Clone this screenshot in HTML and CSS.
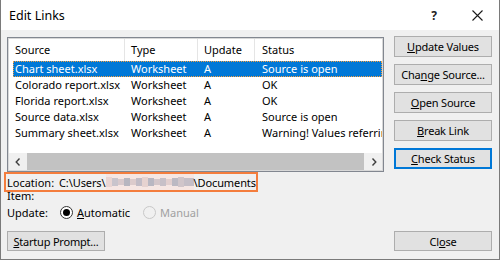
FILE: index.html
```html
<!DOCTYPE html>
<html>
<head>
<meta charset="utf-8">
<link rel="stylesheet" href="styles.css">
</head>
<body>
<div class="window">
  <div class="titlebar">
    <span class="title">Edit Links</span>
    <span class="help">?</span>
    <svg class="close-x" width="11" height="11" viewBox="0 0 11 11"><path d="M0.5 0.5 L10.5 10.5 M10.5 0.5 L0.5 10.5" stroke="#1a1a1a" stroke-width="1.1" fill="none"/></svg>
  </div>
  <div class="body">
    <div class="main">
      <div class="listbox">
        <div class="grid header">
          <div class="c1">Source</div>
          <div class="c2">Type</div>
          <div class="c3">Update</div>
          <div class="c4">Status</div>
        </div>
        <div class="rows">
          <div class="grid row selected">
            <div class="c1">Chart sheet.xlsx</div><div class="c2">Worksheet</div><div class="c3">A</div><div class="c4">Source is open</div>
          </div>
          <div class="grid row">
            <div class="c1">Colorado report.xlsx</div><div class="c2">Worksheet</div><div class="c3">A</div><div class="c4">OK</div>
          </div>
          <div class="grid row">
            <div class="c1">Florida report.xlsx</div><div class="c2">Worksheet</div><div class="c3">A</div><div class="c4">OK</div>
          </div>
          <div class="grid row">
            <div class="c1">Source data.xlsx</div><div class="c2">Worksheet</div><div class="c3">A</div><div class="c4">Source is open</div>
          </div>
          <div class="grid row">
            <div class="c1">Summary sheet.xlsx</div><div class="c2">Worksheet</div><div class="c3">A</div><div class="c4">Warning! Values referrin</div>
          </div>
        </div>
        <div class="hscroll">
          <div class="arrow"><svg width="6" height="8" viewBox="0 0 6 8"><path d="M4.5 0.5 L1.2 4 L4.5 7.5" stroke="#404040" stroke-width="1.4" fill="none"/></svg></div>
          <div class="thumb"></div>
          <div class="arrow"><svg width="6" height="8" viewBox="0 0 6 8"><path d="M1.5 0.5 L4.8 4 L1.5 7.5" stroke="#404040" stroke-width="1.4" fill="none"/></svg></div>
        </div>
      </div>
      <div class="side">
        <button class="btn"><u>U</u>pdate Values</button>
        <button class="btn">Cha<u>n</u>ge Source...</button>
        <button class="btn"><u>O</u>pen Source</button>
        <button class="btn"><u>B</u>reak Link</button>
        <button class="btn default"><u>C</u>heck Status</button>
      </div>
    </div>
    <div class="location">
      <span class="lbl">Location:</span>
      <span class="path">C:\Users\</span>
      <svg class="mosaic" width="88" height="16" viewBox="0 0 88 16">
        <rect x="0" y="0" width="88" height="16" fill="#f6e6e3"/>
        <rect x="0" y="3" width="6" height="10" fill="#e9d5d3"/>
        <rect x="6" y="4" width="6" height="8" fill="#c9c4cc"/>
        <rect x="12" y="5" width="6" height="6" fill="#d8c9cc"/>
        <rect x="18" y="4" width="6" height="8" fill="#b7b6c0"/>
        <rect x="24" y="5" width="6" height="6" fill="#dccbcc"/>
        <rect x="30" y="4" width="6" height="8" fill="#c2bcc6"/>
        <rect x="36" y="3" width="6" height="10" fill="#e6d2d0"/>
        <rect x="42" y="4" width="6" height="8" fill="#b9b7c2"/>
        <rect x="48" y="5" width="6" height="6" fill="#d4c6ca"/>
        <rect x="54" y="4" width="6" height="8" fill="#c7c0c8"/>
        <rect x="60" y="5" width="6" height="6" fill="#e2cfcf"/>
        <rect x="66" y="4" width="6" height="8" fill="#bcb9c3"/>
        <rect x="72" y="3" width="6" height="10" fill="#d0c5ca"/>
        <rect x="78" y="4" width="10" height="8" fill="#c4bec7"/>
      </svg>
      <span class="path">\Documents</span>
    </div>
    <div class="item">Item:</div>
    <div class="update">
      <span class="lbl">Update:</span>
      <span class="radio checked"></span><span class="rlabel"><u>A</u>utomatic</span>
      <span class="radio disabled"></span><span class="rlabel disabled">Manual</span>
    </div>
    <div class="footer">
      <button class="btn"><u>S</u>tartup Prompt...</button>
      <button class="btn">Cl<u>o</u>se</button>
    </div>
  </div>
</div>
</body>
</html>
```

FILE: styles.css
```css
* { box-sizing: border-box; }
html, body { margin: 0; padding: 0; }
body {
  width: 500px;
  height: 260px;
  overflow: hidden;
  font-family: "Noto Sans", "Open Sans", sans-serif;
  font-size: 11px;
  color: #000;
  background: #f0f0f0;
}
.window {
  width: 500px;
  height: 260px;
  border: 1px solid #7a7a7a;
  border-top: none;
  background: #f0f0f0;
  display: flex;
  flex-direction: column;
}
.titlebar {
  height: 30px;
  background: #fff;
  display: flex;
  align-items: center;
  padding-left: 8px;
  flex: none;
}
.title { font-size: 12.5px; flex: 1; }
.help { font-size: 12px; font-weight: bold; margin-right: 35px; color: #222; }
.close-x { margin-right: 16px; }
.body {
  flex: 1;
  padding: 6px 7px 8px 6px;
  display: flex;
  flex-direction: column;
}
.main { display: flex; align-items: flex-start; height: 136px; flex: none; }
.listbox {
  margin-top: 1px;
  width: 377px;
  height: 135px;
  border: 1px solid #828790;
  box-shadow: inset 0 0 0 1px #d8d8d8;
  background: #fff;
  display: flex;
  flex-direction: column;
  overflow: hidden;
  padding: 1px;
}
.grid {
  display: grid;
  grid-template-columns: 112px 73px 57px 1fr;
  margin-left: 4px;
  white-space: nowrap;
  overflow: hidden;
}
.grid > div { overflow: hidden; }
.header { height: 22px; align-items: center; }
.header > div { height: 22px; line-height: 22px; border-right: 1px solid #e5e5e5; }
.header .c4 { border-right: none; }
.c1 { padding-left: 2px; }
.c2 { padding-left: 6px; }
.c3 { padding-left: 6px; }
.c4 { padding-left: 7px; }
.rows { flex: 1; }
.row { height: 16px; line-height: 16px; }
.selected { background: #0078d7; color: #fff; outline: 1px dotted #f5a040; outline-offset: -1px; }
.hscroll {
  height: 17px;
  display: flex;
  background: #f0f0f0;
  flex: none;
}
.hscroll .arrow { width: 17px; display: flex; align-items: center; justify-content: center; }
.hscroll .thumb { flex: 1; background: #c2c2c2; margin: 0 1px; }
.side { display: flex; flex-direction: column; gap: 7px; margin-left: 10px; }
.btn {
  width: 98px;
  height: 21px;
  padding: 0;
  font: inherit;
  letter-spacing: -0.2px;
  color: #000;
  background: #e1e1e1;
  border: 1px solid #adadad;
  white-space: nowrap;
}
.btn.default { border: 1px solid #0078d7; box-shadow: inset 0 0 0 1px #0078d7; }
.location {
  margin-left: -3px;
  width: 254px;
  height: 20px;
  border: 2px solid #f47d3d;
  display: flex;
  align-items: center;
  padding-left: 1px;
  white-space: nowrap;
  overflow: hidden;
}
.location .lbl { width: 52px; flex: none; }
.location .path { flex: none; letter-spacing: -0.1px; }
.mosaic { display: block; flex: none; }
.item { height: 12px; line-height: 12px; margin-top: -2px; }
.update { height: 20px; display: flex; align-items: center; }
.update .lbl { width: 53px; }
.radio {
  width: 13px; height: 13px; border-radius: 50%;
  border: 1px solid #333; background: #fff; margin-right: 4px;
  display: inline-flex; align-items: center; justify-content: center;
}
.radio.checked::after { content: ""; width: 7px; height: 7px; border-radius: 50%; background: #000; }
.radio.disabled { border-color: #c8c8c8; background: #f0f0f0; margin-left: 13px; }
.rlabel.disabled { color: #a0a0a0; }
.footer { margin-top: 9px; display: flex; justify-content: space-between; }
.footer .btn { height: 20px; }
```
